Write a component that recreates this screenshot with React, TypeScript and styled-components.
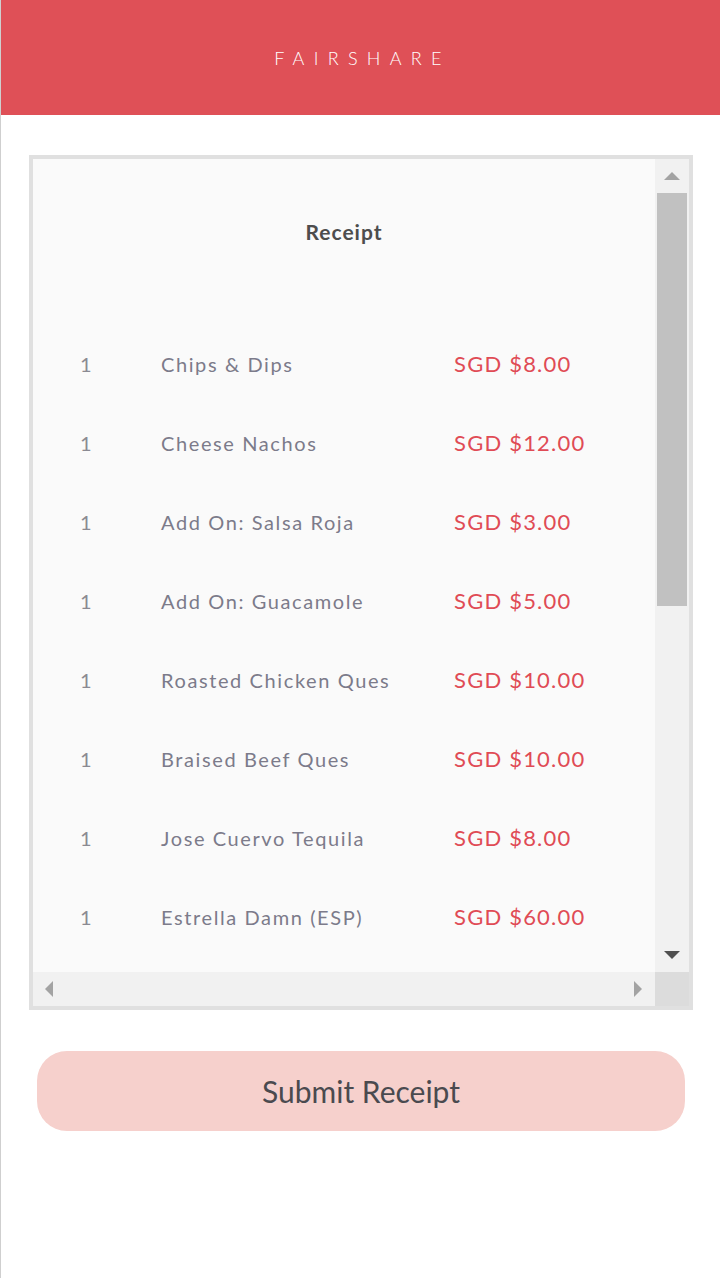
import React from "react";
import styled, { createGlobalStyle } from "styled-components";

const Global = createGlobalStyle`
  html, body { margin: 0; padding: 0; background: #ffffff; }
  body { font-family: Lato, "Open Sans", sans-serif; }
  * { box-sizing: border-box; }
`;

const Page = styled.div`
  min-height: 1278px;
  border-left: 1px solid #cfcfcf;
  background: #ffffff;
`;

const Header = styled.header`
  height: 115px;
  background: #df5057;
  display: flex;
  align-items: center;
  justify-content: center;
`;

const Brand = styled.h1`
  margin: 0;
  font-family: Lato, sans-serif;
  font-weight: 300;
  font-size: 18px;
  letter-spacing: 9.3px;
  color: #ffffff;
  padding-left: 4px;
`;

const Main = styled.main`
  padding: 40px 27px 0 28px;
  display: flex;
  flex-direction: column;
`;

const ScrollBox = styled.section`
  border: 4px solid #e0e0e0;
  display: grid;
  grid-template-columns: 1fr 34px;
  grid-template-rows: 813px 34px;
  background: #f1f1f1;
`;

const Viewport = styled.div`
  background: #fafafa;
  overflow: hidden;
`;

const Title = styled.h2`
  margin: 0;
  padding-top: 60px;
  height: 165px;
  text-align: center;
  font-family: Lato, sans-serif;
  font-weight: 700;
  font-size: 21px;
  line-height: 26px;
  letter-spacing: 1px;
  color: #4d4d4d;
`;

const Row = styled.div`
  display: grid;
  grid-template-columns: 81px 293px auto;
  align-items: center;
  height: 79px;
  padding-left: 47px;
  font-family: Lato, sans-serif;
  font-size: 20px;
`;

const Qty = styled.span`
  color: #8a8a92;
  letter-spacing: 1px;
`;

const Name = styled.span`
  color: #7c7b8a;
  letter-spacing: 1.6px;
  white-space: nowrap;
`;

const Price = styled.span`
  color: #e04b55;
  font-size: 22px;
  letter-spacing: 1.2px;
  white-space: nowrap;
`;

const VTrack = styled.div`
  background: #f1f1f1;
  display: flex;
  flex-direction: column;
`;

const ArrowBtn = styled.div`
  height: 34px;
  width: 34px;
  display: flex;
  align-items: center;
  justify-content: center;
  flex: none;
`;

const Thumb = styled.div`
  margin: 0 2px;
  height: 413px;
  background: #c1c1c1;
  flex: none;
`;

const Spacer = styled.div`
  flex: 1;
`;

const HTrack = styled.div`
  background: #f1f1f1;
  display: flex;
  justify-content: space-between;
  align-items: center;
  padding: 0 13px 0 12px;
`;

const Corner = styled.div`
  background: #dcdcdc;
`;

const SubmitButton = styled.button`
  margin: 41px 8px 0 8px;
  height: 80px;
  border: none;
  border-radius: 30px;
  background: #f6d0cc;
  font-family: Lato, sans-serif;
  font-size: 30px;
  color: #4a4a4f;
  cursor: pointer;
  padding: 0;
`;

const Tri = ({ dir, color }: { dir: "up" | "down" | "left" | "right"; color: string }) => {
  const horiz = dir === "left" || dir === "right";
  const w = horiz ? 8 : 16;
  const h = horiz ? 16 : 8;
  const pts =
    dir === "up"
      ? "0,8 8,0 16,8"
      : dir === "down"
      ? "0,0 16,0 8,8"
      : dir === "left"
      ? "8,0 0,8 8,16"
      : "0,0 8,8 0,16";
  return (
    <svg width={w} height={h} viewBox={`0 0 ${w} ${h}`}>
      <polygon points={pts} fill={color} />
    </svg>
  );
};

const items = [
  { qty: 1, name: "Chips & Dips", price: "SGD $8.00" },
  { qty: 1, name: "Cheese Nachos", price: "SGD $12.00" },
  { qty: 1, name: "Add On: Salsa Roja", price: "SGD $3.00" },
  { qty: 1, name: "Add On: Guacamole", price: "SGD $5.00" },
  { qty: 1, name: "Roasted Chicken Ques", price: "SGD $10.00" },
  { qty: 1, name: "Braised Beef Ques", price: "SGD $10.00" },
  { qty: 1, name: "Jose Cuervo Tequila", price: "SGD $8.00" },
  { qty: 1, name: "Estrella Damn (ESP)", price: "SGD $60.00" },
];

export default function App() {
  return (
    <>
      <Global />
      <Page>
        <Header>
          <Brand>FAIRSHARE</Brand>
        </Header>
        <Main>
          <ScrollBox>
            <Viewport>
              <Title>Receipt</Title>
              {items.map((it, i) => (
                <Row key={i}>
                  <Qty>{it.qty}</Qty>
                  <Name>{it.name}</Name>
                  <Price>{it.price}</Price>
                </Row>
              ))}
            </Viewport>
            <VTrack>
              <ArrowBtn>
                <Tri dir="up" color="#a3a3a3" />
              </ArrowBtn>
              <Thumb />
              <Spacer />
              <ArrowBtn>
                <Tri dir="down" color="#505050" />
              </ArrowBtn>
            </VTrack>
            <HTrack>
              <Tri dir="left" color="#a3a3a3" />
              <Tri dir="right" color="#a3a3a3" />
            </HTrack>
            <Corner />
          </ScrollBox>
          <SubmitButton>Submit Receipt</SubmitButton>
        </Main>
      </Page>
    </>
  );
}
